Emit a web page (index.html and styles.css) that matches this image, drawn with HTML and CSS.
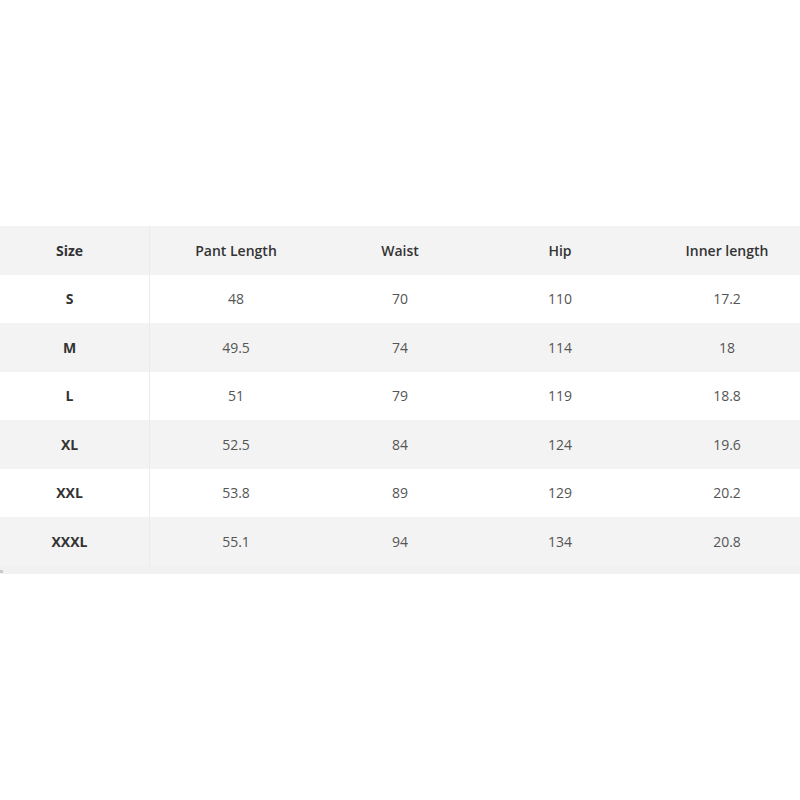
FILE: index.html
```html
<!DOCTYPE html>
<html>
<head>
<meta charset="utf-8">
<link rel="stylesheet" href="styles.css">
</head>
<body>
<div class="page">
  <div class="table-wrap">
    <div class="table">
      <div class="row head">
        <div class="cell first">Size</div>
        <div class="cell c2">Pant Length</div>
        <div class="cell c3">Waist</div>
        <div class="cell c4">Hip</div>
        <div class="cell c5">Inner length</div>
      </div>
      <div class="row">
        <div class="cell first">S</div>
        <div class="cell c2">48</div>
        <div class="cell c3">70</div>
        <div class="cell c4">110</div>
        <div class="cell c5">17.2</div>
      </div>
      <div class="row alt">
        <div class="cell first">M</div>
        <div class="cell c2">49.5</div>
        <div class="cell c3">74</div>
        <div class="cell c4">114</div>
        <div class="cell c5">18</div>
      </div>
      <div class="row">
        <div class="cell first">L</div>
        <div class="cell c2">51</div>
        <div class="cell c3">79</div>
        <div class="cell c4">119</div>
        <div class="cell c5">18.8</div>
      </div>
      <div class="row alt">
        <div class="cell first">XL</div>
        <div class="cell c2">52.5</div>
        <div class="cell c3">84</div>
        <div class="cell c4">124</div>
        <div class="cell c5">19.6</div>
      </div>
      <div class="row">
        <div class="cell first">XXL</div>
        <div class="cell c2">53.8</div>
        <div class="cell c3">89</div>
        <div class="cell c4">129</div>
        <div class="cell c5">20.2</div>
      </div>
      <div class="row alt">
        <div class="cell first">XXXL</div>
        <div class="cell c2">55.1</div>
        <div class="cell c3">94</div>
        <div class="cell c4">134</div>
        <div class="cell c5">20.8</div>
      </div>
    </div>
    <div class="scrollbar"><span class="grip"></span></div>
  </div>
</div>
</body>
</html>
```

FILE: styles.css
```css
html, body {
  margin: 0;
  padding: 0;
  background: #ffffff;
}

.page {
  width: 800px;
  height: 800px;
  padding-top: 226px;
  box-sizing: border-box;
  overflow: hidden;
  font-family: "Open Sans", "Noto Sans", sans-serif;
}

.table-wrap {
  width: 800px;
  overflow: hidden;
}

.table {
  display: flex;
  flex-direction: column;
  width: 812px;
}

.row {
  display: grid;
  grid-template-columns: 150px 172px 156px 164px 170px;
  height: 48.5px;
  background: #ffffff;
}

.row.head,
.row.alt {
  background: #f3f3f3;
}

.cell {
  display: flex;
  align-items: center;
  justify-content: center;
  font-size: 14px;
  color: #555555;
  white-space: nowrap;
}

.cell.first {
  padding-right: 10px;
  border-right: 1px solid #ebebeb;
  font-weight: 700;
  color: #333333;
}

.head .cell {
  font-weight: 600;
  color: #333333;
}

.head .cell.first {
  font-weight: 700;
}

.scrollbar {
  position: relative;
  height: 8px;
  background: #f1f1f1;
}

.grip {
  position: absolute;
  left: 0;
  bottom: 1px;
  width: 3px;
  height: 3px;
  background: #c8c8c8;
}
```
